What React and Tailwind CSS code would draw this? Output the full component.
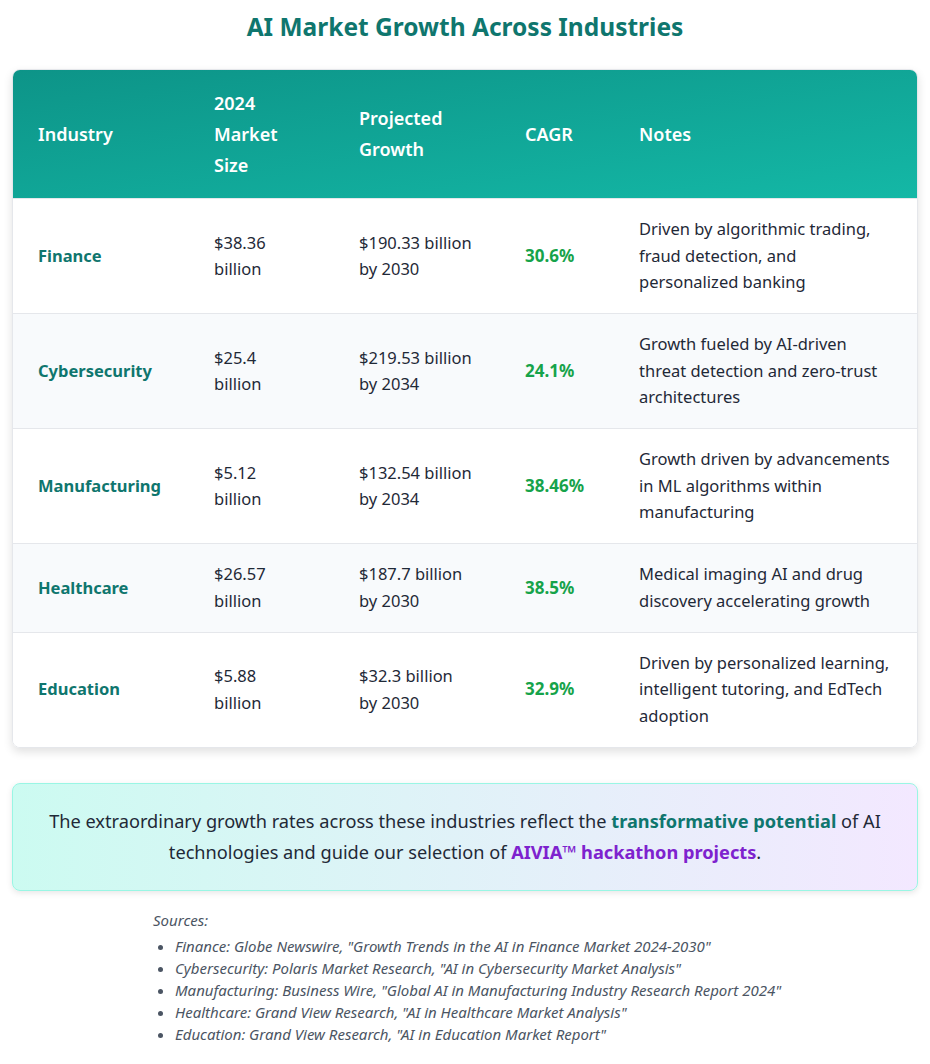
import React from "react";

const rows = [
  { name: "Finance", size: ["$38.36", "billion"], growth: ["$190.33 billion", "by 2030"], cagr: "30.6%", notes: "Driven by algorithmic trading, fraud detection, and personalized banking" },
  { name: "Cybersecurity", size: ["$25.4", "billion"], growth: ["$219.53 billion", "by 2034"], cagr: "24.1%", notes: "Growth fueled by AI-driven threat detection and zero-trust architectures" },
  { name: "Manufacturing", size: ["$5.12", "billion"], growth: ["$132.54 billion", "by 2034"], cagr: "38.46%", notes: "Growth driven by advancements in ML algorithms within manufacturing" },
  { name: "Healthcare", size: ["$26.57", "billion"], growth: ["$187.7 billion", "by 2030"], cagr: "38.5%", notes: "Medical imaging AI and drug discovery accelerating growth" },
  { name: "Education", size: ["$5.88", "billion"], growth: ["$32.3 billion", "by 2030"], cagr: "32.9%", notes: "Driven by personalized learning, intelligent tutoring, and EdTech adoption" },
];

const sources = [
  'Finance: Globe Newswire, "Growth Trends in the AI in Finance Market 2024-2030"',
  'Cybersecurity: Polaris Market Research, "AI in Cybersecurity Market Analysis"',
  'Manufacturing: Business Wire, "Global AI in Manufacturing Industry Research Report 2024"',
  'Healthcare: Grand View Research, "AI in Healthcare Market Analysis"',
  'Education: Grand View Research, "AI in Education Market Report"',
];

export default function App() {
  return (
    <div className="w-[930px] min-h-[1064px] bg-white text-[#1f2937] font-['Noto_Sans',sans-serif]">
      <h1 className="pt-[10px] text-center text-[24.5px] leading-[34px] font-bold text-[#0f766e]">
        AI Market Growth Across Industries
      </h1>
      <div className="mx-[12px] mt-[25px] rounded-[8px] border border-[#e5e7eb] shadow-[0_4px_10px_rgba(0,0,0,0.12)] overflow-hidden">
        <table className="w-full table-fixed border-collapse">
          <colgroup>
            <col className="w-[176px]" />
            <col className="w-[145px]" />
            <col className="w-[166px]" />
            <col className="w-[114px]" />
            <col />
          </colgroup>
          <thead className="bg-linear-to-br from-[#0d9488] to-[#14b8a6] text-white">
            <tr>
              {["Industry", "2024 Market Size", "Projected Growth", "CAGR", "Notes"].map((h) => (
                <th key={h} className="text-left align-middle font-semibold text-[18px] leading-[31px] pl-[25px] pr-[24px] py-[17.5px]">
                  {h}
                </th>
              ))}
            </tr>
          </thead>
          <tbody>
            {rows.map((r, i) => (
              <tr key={r.name} className={`border-t border-[#e5e7eb] ${i % 2 === 1 ? "bg-[#f8fafc]" : "bg-white"}`}>
                <td className="pl-[25px] pr-[12px] py-[17.25px] align-middle font-bold text-[16.5px] leading-[26.5px] text-[#0f766e]">{r.name}</td>
                <td className="pl-[25px] pr-[12px] py-[17.25px] align-middle text-[16.5px] leading-[26.5px]">
                  {r.size[0]}<br />{r.size[1]}
                </td>
                <td className="pl-[25px] pr-[8px] py-[17.25px] align-middle text-[16.5px] leading-[26.5px]">
                  {r.growth[0]}<br />{r.growth[1]}
                </td>
                <td className="pl-[25px] pr-[8px] py-[17.25px] align-middle font-bold text-[17px] leading-[26.5px] text-[#16a34a]">{r.cagr}</td>
                <td className="pl-[25px] pr-[24px] py-[17.25px] align-middle text-[16.5px] leading-[26.5px]">{r.notes}</td>
              </tr>
            ))}
          </tbody>
        </table>
      </div>

      <div className="mx-[12px] mt-[35px] rounded-[8px] border border-[#99f6e4] bg-linear-to-r from-[#ccfbf1] to-[#f3e8ff] shadow-[0_2px_6px_rgba(0,0,0,0.1)] px-[20px] py-[22px] text-center text-[18.2px] leading-[31px] text-[#1f2937]">
        The extraordinary growth rates across these industries reflect the{" "}
        <span className="font-bold text-[#0f766e]">transformative potential</span> of AI technologies and guide our selection of{" "}
        <span className="font-bold text-[#7e22ce]">AIVIA™ hackathon projects</span>.
      </div>

      <div className="pl-[153px] pr-[20px] mt-[18px] text-[15px] italic text-[#4b5563]">
        <p className="leading-[22px]">Sources:</p>
        <ul className="mt-[4px] list-disc pl-[22px] leading-[22px]">
          {sources.map((s) => (
            <li key={s}>{s}</li>
          ))}
        </ul>
      </div>
    </div>
  );
}
